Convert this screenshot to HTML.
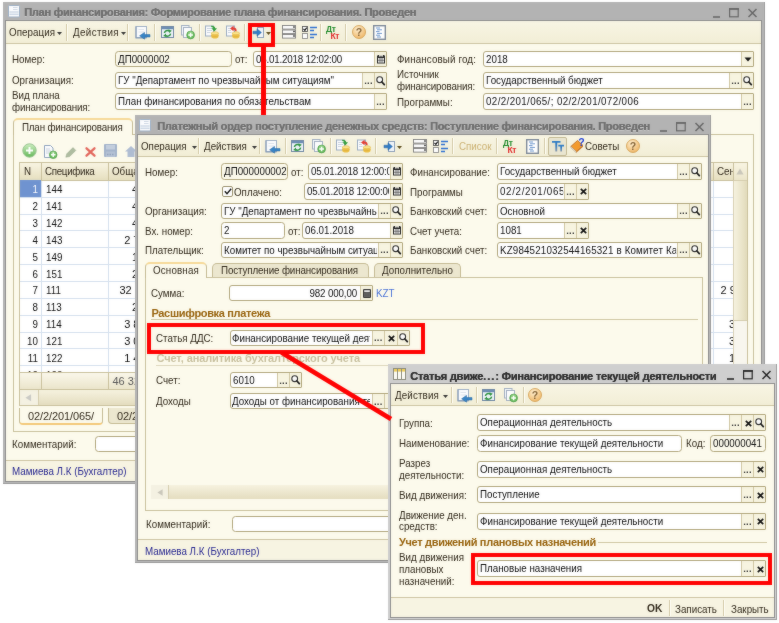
<!DOCTYPE html><html lang="ru"><head><meta charset="utf-8"><title>План финансирования</title><style>
*{box-sizing:border-box;margin:0;padding:0}
html,body{width:779px;height:623px;background:#fff;overflow:hidden}
body{position:relative;font-family:"Liberation Sans",sans-serif;font-size:11px;letter-spacing:0;color:#30281a;filter:url(#soft);}
.a{position:absolute}
.t{position:absolute;white-space:nowrap;line-height:13px;transform:scaleX(0.89);transform-origin:0 50%}
.tr{transform-origin:100% 50%}
.tc{transform-origin:50% 50%}
.ns{transform:none}
.win{position:absolute;background:#b3b3b3;box-shadow:inset -1px -1px 0 #9c9c9c;}
.win.act{background:#cfcfcf;}
.body{position:absolute;background:#fcfaec;border:1px solid #8e8e8e;}
.ttl{position:absolute;white-space:nowrap;font-weight:bold;font-size:11px;letter-spacing:-0.26px;color:#6f6f6f;line-height:14px;text-shadow:0.4px 0 0 #6f6f6f,0 1px 0 #c8c8c8}
.act .ttl{color:#2e2e2e;text-shadow:0.4px 0 0 #2e2e2e}
.tb{position:absolute;background:linear-gradient(#f8f5e4,#f2eed6);border-bottom:1px solid #cdc4a2;}
.sep{position:absolute;width:1px;background:#d3caa8;box-shadow:1px 0 0 #fffef6;}
.in{position:absolute;background:#fff;border:1px solid #b1a67b;border-radius:3.5px;overflow:hidden;white-space:nowrap;line-height:14px;padding-left:3px;color:#0c0c0c}
.in.ro{background:#fcfaec}
.btn{position:absolute;top:0;bottom:0;background:#f7f4e0;border-left:1px solid #cfc6a2;text-align:center;font-size:9px;line-height:13px;color:#222;letter-spacing:0}
.tab{position:absolute;border:1px solid #c4ba93;border-bottom:none;border-radius:5px 5px 0 0;background:#ece7cf;white-space:nowrap;text-align:center;line-height:14px}
.tab.on{background:#fcfaec;border-top:2px solid #f6d997;}
.panel{position:absolute;border:1px solid #c9c09c;}
.grp{position:absolute;white-space:nowrap;font-weight:bold;font-size:11px;letter-spacing:-0.1px;color:#96610a;line-height:13px}
.grp.dis{color:#c7bf9d}
.ln{position:absolute;height:1px;background:#cfc6a2}
.red{position:absolute;border:4px solid #ff0000;}
.blue{color:#25258f}
svg{position:absolute;overflow:visible}
</style></head><body><svg width="0" height="0" style="position:absolute"><filter id="soft" x="0" y="0" width="100%" height="100%" color-interpolation-filters="sRGB"><feGaussianBlur stdDeviation="1" result="b"/><feComposite in="SourceGraphic" in2="b" operator="arithmetic" k1="0" k2="0.7" k3="0.3" k4="0"/></filter></svg>
<div class="win" style="left:3px;top:2px;width:762px;height:482px"></div>
<div class="body" style="left:5px;top:20px;width:757px;height:462px"></div>
<svg style="left:8.3px;top:5.2px" width="12" height="12.5" viewBox="0 0 12 12.5"><rect x="0.5" y="0.5" width="11" height="11.500" rx="1" fill="#fbfcfe" stroke="#9db0c6"/><path d="M5 2.500h4.500M5 4.500h4.500" stroke="#d3dbe6" stroke-width="1"/><path d="M1.500 7h9M1.500 9.300h9" stroke="#cfd9e6" stroke-width="1.500"/></svg>
<div class="ttl" style="left:24px;top:5px">План финансирования: Формирование плана финансирования. Проведен</div>
<svg style="left:713px;top:7.5px" width="46" height="10" viewBox="0 0 46 10"><path d="M0 9h7" stroke="#666" stroke-width="1.6"/><rect x="16.6" y="0.8" width="8.6" height="8" fill="none" stroke="#666" stroke-width="1.2"/><path d="M16 1h10" stroke="#666" stroke-width="1.6"/><path d="M35.5 1l8 8M43.500 1l-8 8" stroke="#666" stroke-width="1.5"/></svg>
<div class="tb" style="left:6px;top:21px;width:755px;height:23px"></div>
<div class="t " style="left:9px;top:25.5px;letter-spacing:0.052px;">Операция</div>
<svg style="left:57px;top:31.5px" width="5" height="3" viewBox="0 0 5 3"><path d="M0 0h5L2.5 3z" fill="#333"/></svg>
<div class="sep" style="left:66px;top:24px;height:17px"></div>
<div class="t " style="left:72.5px;top:25.5px;letter-spacing:0.436px;">Действия</div>
<svg style="left:120.5px;top:31.5px" width="5" height="3" viewBox="0 0 5 3"><path d="M0 0h5L2.5 3z" fill="#333"/></svg>
<div class="sep" style="left:127px;top:24px;height:17px"></div>
<svg style="left:134.5px;top:25.5px" width="16" height="14" viewBox="0 0 16 14"><rect x="1" y="0.5" width="10.5" height="11" fill="#fbfcfe" stroke="#9fb0c6" stroke-width="1"/><path d="M1 0.5v11.500h10.500" stroke="#7f95b3" stroke-width="1.100" fill="none"/><path d="M3.500 3.500h5.500M3.500 6h5.500" stroke="#d5dce6" stroke-width="0.8"/><path d="M15 8.600h-5.500v-2.200L4.600 9.800l4.900 3.400v-2.200h5.500z" fill="#3583c6" stroke="#25659f" stroke-width="0.5"/></svg>
<div class="sep" style="left:154px;top:24px;height:17px"></div>
<svg style="left:160.7px;top:26.3px" width="13" height="12" viewBox="0 0 13 12"><rect x="0.5" y="0.500" width="12" height="11" fill="#eef3f9" stroke="#6f87a3"/><rect x="1" y="1" width="11" height="2.200" fill="#6b8bb3"/><path d="M3.400 7A3.100 2.800 0 0 1 8.300 5" stroke="#2f9440" stroke-width="1.500" fill="none"/><path d="M7.300 3.300l3.500 1.400-2.600 2.300z" fill="#2f9440"/><path d="M9.600 7.600A3.100 2.800 0 0 1 4.700 9.600" stroke="#2f9440" stroke-width="1.500" fill="none"/><path d="M5.700 11.300l-3.500-1.400 2.600-2.300z" fill="#2f9440"/></svg>
<svg style="left:181px;top:25px" width="14" height="14" viewBox="0 0 14 14"><rect x="0.5" y="0.5" width="7.5" height="9.500" fill="#f3f6fa" stroke="#a3b0c2"/><rect x="2.5" y="2.500" width="8" height="10" fill="#fdfdfe" stroke="#a3b0c2"/><circle cx="9.6" cy="10" r="3.9" fill="#67bb5b" stroke="#4a9a46" stroke-width="0.7"/><circle cx="9.6" cy="8.83" r="2.535" fill="#a6dd98" opacity="0.55"/><path d="M9.6 7.66v4.68M7.26 10h4.68" stroke="#fff" stroke-width="1.5"/></svg>
<div class="sep" style="left:199px;top:24px;height:17px"></div>
<svg style="left:205px;top:25px" width="14" height="14" viewBox="0 0 14 14"><rect x="0.500" y="1" width="8" height="10" fill="#fbfcfe" stroke="#9aabc1"/><path d="M2 3.500h5M2 5.500h5M2 7.500h3.500" stroke="#c6d0dc" stroke-width="0.9"/><path d="M6.200 0.800c2.400-.2 3.800.7 4 2.400h1.800L9.300 6.400 6.500 3.200h1.800c-.2-.8-.9-1.200-2.100-1.300z" fill="#2f9c3a"/><path d="M6.300 8.200v3.900c0 .9 1.600 1.500 3.600 1.500s3.600-.6 3.600-1.500V8.200z" fill="#ecbf45"/><path d="M6.300 10.200c0 .9 1.600 1.500 3.600 1.500s3.600-.6 3.600-1.500" stroke="#d6a531" stroke-width="0.500" fill="none"/><ellipse cx="9.900" cy="8.200" rx="3.600" ry="1.500" fill="#fae48e" stroke="#dcae38" stroke-width="0.5"/></svg>
<svg style="left:226px;top:25px" width="14" height="14" viewBox="0 0 14 14"><rect x="0.500" y="1" width="8" height="10" fill="#fbfcfe" stroke="#9aabc1"/><path d="M2 3.500h2M2 5.500h3M2 7.500h3.500" stroke="#c6d0dc" stroke-width="0.9"/><path d="M10.600 6.300c.3-2.400-.9-3.700-3-3.800V0.700L4 3.400l3.600 2.800V4.400c1 .1 1.600.7 1.500 1.900z" fill="#e2392f"/><path d="M6.300 8.200v3.900c0 .9 1.600 1.500 3.600 1.500s3.600-.6 3.600-1.500V8.200z" fill="#ecbf45"/><path d="M6.300 10.200c0 .9 1.600 1.500 3.600 1.500s3.600-.6 3.600-1.500" stroke="#d6a531" stroke-width="0.500" fill="none"/><ellipse cx="9.900" cy="8.200" rx="3.600" ry="1.500" fill="#fae48e" stroke="#dcae38" stroke-width="0.5"/></svg>
<div class="sep" style="left:244px;top:24px;height:17px"></div>
<svg style="left:253px;top:27px" width="11" height="11" viewBox="0 0 11 11"><rect x="4.500" y="0.500" width="6" height="10" fill="#f3f6fa" stroke="#8c9fb8"/><path d="M0 4.200h4V1.800L8.400 5.500 4 9.200V6.800H0z" fill="#2f7ac4" stroke="#1f5e9f" stroke-width="0.5"/></svg>
<svg style="left:266px;top:31.5px" width="5" height="3" viewBox="0 0 5 3"><path d="M0 0h5L2.5 3z" fill="#5a4a1a"/></svg>
<svg style="left:282px;top:25px" width="14" height="14" viewBox="0 0 14 14"><rect x="0.500" y="0.500" width="13" height="3.600" fill="#fff" stroke="#7a7a7a" stroke-width="0.9"/><rect x="0.5" y="5" width="13" height="3.600" fill="#fff" stroke="#7a7a7a" stroke-width="0.9"/><rect x="0.5" y="9.500" width="13" height="3.600" fill="#fff" stroke="#7a7a7a" stroke-width="0.9"/><path d="M12 1.200v1.600M12 5.700v1.600M12 10.200v1.600" stroke="#333" stroke-width="1.600"/></svg>
<svg style="left:302px;top:26px" width="15" height="13" viewBox="0 0 15 13"><rect x="0.5" y="0.5" width="5" height="5" fill="#fff" stroke="#555" stroke-width="0.9"/><path d="M1.500 3l1.400 1.400L4.700 1.600" stroke="#111" stroke-width="1.100" fill="none"/><rect x="0.5" y="7.500" width="5" height="5" fill="#fff" stroke="#888" stroke-width="0.9"/><path d="M8 1.500h7M8 4.500h4M8 8.500h7M8 11.500h4" stroke="#2c6fd1" stroke-width="1.500"/></svg>
<div class="sep" style="left:320px;top:24px;height:17px"></div>
<div class="a" style="left:326px;top:26px;width:16px;height:14px;font-weight:bold;font-size:8.5px;letter-spacing:-0.4px;line-height:7px"><span class="a" style="left:0;top:0;color:#1f8a2a">Дт</span><span class="a" style="left:4.5px;top:6.500px;color:#e02b2b">Кт</span></div>
<div class="sep" style="left:345px;top:24px;height:17px"></div>
<svg style="left:351.5px;top:25.299999999999997px" width="14.0" height="14.0" viewBox="0 0 14.0 14.0"><defs><radialGradient id="hg358" cx="0.4" cy="0.3" r="0.8"><stop offset="0" stop-color="#fff0d2"/><stop offset="1" stop-color="#edb05a"/></radialGradient></defs><circle cx="7.0" cy="7.0" r="6.5" fill="url(#hg358)" stroke="#cf9a4a" stroke-width="0.8"/><text x="7.0" y="10.7" text-anchor="middle" font-family="Liberation Sans" font-weight="bold" font-size="10.5" fill="#86663a">?</text></svg>
<svg style="left:373px;top:24.5px" width="13" height="15" viewBox="0 0 13 15"><rect x="0.700" y="0.700" width="11.600" height="13.600" fill="#fff" stroke="#7b8797" stroke-width="1.400"/><path d="M3 3h4M4 4.800h5M3 6.600h3.500M4 8.400h5M3 10.200h4M4 12h4" stroke="#4a7dc0" stroke-width="0.8"/></svg>
<div class="t " style="left:12px;top:52.5px;">Номер:</div>
<div class="in ro" style="left:115px;top:50.8px;width:117px;height:16.5px;line-height:14.5px;"><div class="a" style="left:1.8px;top:0px;width:125.8px;overflow:hidden;transform:scaleX(0.89);transform-origin:0 50%;">ДП0000002</div></div>
<div class="t " style="left:235px;top:52.5px;">от:</div>
<div class="in " style="left:253px;top:50.8px;width:134px;height:16.5px;line-height:14.5px;border-radius:3px 1px 1px 3px;"><div class="a" style="left:1.8px;top:0px;width:131.5px;overflow:hidden;transform:scaleX(0.89);transform-origin:0 50%;letter-spacing:-0.226px;">05.01.2018 12:02:00</div><div class="btn" style="right:0px;width:12px"><svg style="left:2px;top:3px" width="8" height="8.500" viewBox="0 0 8 8.500"><rect x="0" y="0.800" width="8" height="7.700" fill="#262626"/><path d="M1.300 0v1.600M6.700 0v1.600" stroke="#262626" stroke-width="1.400"/><path d="M2.900 0.400v1.500M5.100 0.400v1.500" stroke="#f4f4f4" stroke-width="1"/><rect x="1" y="3" width="6" height="4.600" fill="#e9e9e9"/><path d="M3 3v4.600M5 3v4.600M1 5.300h6" stroke="#555" stroke-width="0.700"/></svg></div></div>
<div class="t " style="left:12px;top:73.5px;">Организация:</div>
<div class="in " style="left:115px;top:72px;width:272px;height:16.5px;line-height:14.5px;border-radius:3px 1px 1px 3px;"><div class="a" style="left:1.8px;top:0px;width:273.0px;overflow:hidden;transform:scaleX(0.89);transform-origin:0 50%;">ГУ "Департамент по чрезвычайным ситуациям"</div><div class="btn" style="right:12px;width:12px"><span style="position:relative;top:0.5px;font-weight:bold;font-size:9.5px;letter-spacing:0.2px;color:#333">...</span></div><div class="btn" style="right:0px;width:12px"><svg style="left:1px;top:2.55px" width="10" height="10" viewBox="0 0 10 10"><circle cx="3.700" cy="3.700" r="2.900" fill="#fff" stroke="#2a2a2a" stroke-width="1.100"/><path d="M5.900 6 L8.300 8.600" stroke="#1a1a1a" stroke-width="1.800" stroke-linecap="round"/></svg></div></div>
<div class="t " style="left:12px;top:88.5px;">Вид плана</div>
<div class="t " style="left:12px;top:100.5px;letter-spacing:-0.185px;">финансирования:</div>
<div class="in " style="left:115px;top:93.1px;width:272px;height:16.5px;line-height:14.5px;border-radius:3px 1px 1px 3px;"><div class="a" style="left:1.8px;top:0px;width:286.5px;overflow:hidden;transform:scaleX(0.89);transform-origin:0 50%;">План финансирования по обязательствам</div><div class="btn" style="right:0px;width:12px"><span style="position:relative;top:0.5px;font-weight:bold;font-size:9.5px;letter-spacing:0.2px;color:#333">...</span></div></div>
<div class="t " style="left:397px;top:52.5px;letter-spacing:0.145px;">Финансовый год:</div>
<div class="in " style="left:483px;top:50.8px;width:271px;height:16.5px;line-height:14.5px;border-radius:3px 1px 1px 3px;"><div class="a" style="left:1.8px;top:0px;width:285.4px;overflow:hidden;transform:scaleX(0.89);transform-origin:0 50%;">2018</div><div class="btn" style="right:0px;width:12px"><svg style="left:2px;top:5.25px" width="8" height="5" viewBox="0 0 8 5"><path d="M0.5 0.5h7L4 4.5z" fill="#111"/></svg></div></div>
<div class="t " style="left:397px;top:68.0px;">Источник</div>
<div class="t " style="left:397px;top:80.0px;letter-spacing:-0.185px;">финансирования:</div>
<div class="in " style="left:483px;top:72px;width:271px;height:16.5px;line-height:14.5px;border-radius:3px 1px 1px 3px;"><div class="a" style="left:1.8px;top:0px;width:271.9px;overflow:hidden;transform:scaleX(0.89);transform-origin:0 50%;">Государственный бюджет</div><div class="btn" style="right:12px;width:12px"><span style="position:relative;top:0.5px;font-weight:bold;font-size:9.5px;letter-spacing:0.2px;color:#333">...</span></div><div class="btn" style="right:0px;width:12px"><svg style="left:1px;top:2.55px" width="10" height="10" viewBox="0 0 10 10"><circle cx="3.700" cy="3.700" r="2.900" fill="#fff" stroke="#2a2a2a" stroke-width="1.100"/><path d="M5.900 6 L8.300 8.600" stroke="#1a1a1a" stroke-width="1.800" stroke-linecap="round"/></svg></div></div>
<div class="t " style="left:397px;top:95.5px;">Программы:</div>
<div class="in " style="left:483px;top:93.1px;width:271px;height:16.5px;line-height:14.5px;border-radius:3px 1px 1px 3px;"><div class="a" style="left:1.8px;top:0px;width:285.4px;overflow:hidden;transform:scaleX(0.89);transform-origin:0 50%;letter-spacing:0.416px;">02/2/201/065/; 02/2/201/072/006</div><div class="btn" style="right:0px;width:12px"><span style="position:relative;top:0.5px;font-weight:bold;font-size:9.5px;letter-spacing:0.2px;color:#333">...</span></div></div>
<div class="panel" style="left:13px;top:134px;width:741px;height:298px"></div>
<div class="tab on" style="left:13px;top:118px;width:119.5px;height:17px"></div>
<div class="t " style="left:22px;top:120.5px;letter-spacing:-0.211px;">План финансирования</div>
<svg style="left:21.9px;top:143.1px" width="15" height="15" viewBox="0 0 15 15"><defs><linearGradient id="ga" x1="0" y1="0" x2="0" y2="1"><stop offset="0" stop-color="#cdeec0"/><stop offset="1" stop-color="#62b656"/></linearGradient></defs><circle cx="7.500" cy="7.500" r="6.700" fill="url(#ga)" stroke="#9ac493" stroke-width="1"/><path d="M7.500 4v7M4 7.500h7" stroke="#fff" stroke-width="1.900"/></svg>
<svg style="left:44px;top:144.5px" width="14" height="14" viewBox="0 0 14 14"><path d="M0.500 0.5h6l2.500 2.500v9.500h-8.500z" fill="#fbfcfe" stroke="#8fa3bd"/><path d="M2 4h4M2 6h5M2 8h3" stroke="#c4cedb" stroke-width="0.9"/><circle cx="9.2" cy="9.8" r="3.8" fill="#67bb5b" stroke="#4a9a46" stroke-width="0.7"/><circle cx="9.2" cy="8.66" r="2.4699999999999998" fill="#a6dd98" opacity="0.55"/><path d="M9.2 7.520000000000001v4.56M6.92 9.8h4.56" stroke="#fff" stroke-width="1.5"/></svg>
<svg style="left:64.5px;top:145.5px" width="12" height="12" viewBox="0 0 12 12"><path d="M0.800 11.200l1-3.400L8 1.600l2.800 2.800L4.600 10.600z" fill="#adbb9f" stroke="#95a588" stroke-width="0.5"/></svg>
<svg style="left:84.8px;top:146.5px" width="11" height="10" viewBox="0 0 11 10"><path d="M1.500 1.300l8 7.400M9.500 1.300l-8 7.400" stroke="#e2675d" stroke-width="2.300" stroke-linecap="round"/></svg>
<svg style="left:104.2px;top:144.0px" width="13" height="13" viewBox="0 0 13 13"><rect x="0" y="0" width="13" height="13" rx="1" fill="#a3b3ca"/><rect x="2" y="1" width="9" height="4.500" fill="#c3cedd"/><rect x="2" y="7.500" width="9" height="5.500" fill="#b4c1d4"/><path d="M3 10.500h7" stroke="#93a4bd" stroke-width="1.500" stroke-dasharray="1.500 1"/></svg>
<svg style="left:124.5px;top:145.5px" width="12" height="11" viewBox="0 0 12 11"><path d="M6 0L12 5.500H9.500V11H2.500V5.500H0z" fill="#aebcd2"/></svg>
<div class="a" style="left:19px;top:162px;width:729px;height:244px;background:#fff;border:1px solid #c9c09c"></div>
<div class="a" style="left:20px;top:163px;width:727px;height:18px;background:linear-gradient(#f8f4e2,#e6dfbf);border-bottom:1px solid #c9c09c"></div>
<div class="a" style="left:41px;top:163px;width:1px;height:18px;background:#c9c09c"></div>
<div class="a" style="left:41px;top:181px;width:1px;height:206px;background:#d5e0ee"></div>
<div class="a" style="left:108px;top:163px;width:1px;height:18px;background:#c9c09c"></div>
<div class="a" style="left:108px;top:181px;width:1px;height:206px;background:#d5e0ee"></div>
<div class="a" style="left:713px;top:163px;width:1px;height:18px;background:#c9c09c"></div>
<div class="a" style="left:713px;top:181px;width:1px;height:206px;background:#d5e0ee"></div>
<div class="t " style="left:23.5px;top:165.0px;">N</div>
<div class="t " style="left:45px;top:165.0px;letter-spacing:-0.357px;">Специфика</div>
<div class="t " style="left:112px;top:165.0px;">Обща</div>
<div class="t " style="left:717px;top:165.0px;">Сен</div>
<div class="a" style="left:20px;top:180.4px;width:21px;height:16.85px;background:#6f93d0"></div>
<div class="a" style="left:20px;top:196.75px;width:713px;height:1px;background:#d5e0ee"></div>
<div class="t tr" style="left:19px;width:19px;text-align:right;top:183.32500000000002px;color:#fff">1</div>
<div class="t " style="left:46px;top:183.32500000000002px;color:#0c0c0c">144</div>
<div class="a" style="left:20px;top:213.6px;width:713px;height:1px;background:#d5e0ee"></div>
<div class="t tr" style="left:19px;width:19px;text-align:right;top:200.175px;color:#0c0c0c">2</div>
<div class="t " style="left:46px;top:200.175px;color:#0c0c0c">141</div>
<div class="a" style="left:20px;top:230.45000000000002px;width:713px;height:1px;background:#d5e0ee"></div>
<div class="t tr" style="left:19px;width:19px;text-align:right;top:217.02500000000003px;color:#0c0c0c">3</div>
<div class="t " style="left:46px;top:217.02500000000003px;color:#0c0c0c">142</div>
<div class="a" style="left:20px;top:247.3px;width:713px;height:1px;background:#d5e0ee"></div>
<div class="t tr" style="left:19px;width:19px;text-align:right;top:233.87500000000003px;color:#0c0c0c">4</div>
<div class="t " style="left:46px;top:233.87500000000003px;color:#0c0c0c">143</div>
<div class="a" style="left:20px;top:264.15000000000003px;width:713px;height:1px;background:#d5e0ee"></div>
<div class="t tr" style="left:19px;width:19px;text-align:right;top:250.72500000000002px;color:#0c0c0c">5</div>
<div class="t " style="left:46px;top:250.72500000000002px;color:#0c0c0c">149</div>
<div class="a" style="left:20px;top:281.0px;width:713px;height:1px;background:#d5e0ee"></div>
<div class="t tr" style="left:19px;width:19px;text-align:right;top:267.575px;color:#0c0c0c">6</div>
<div class="t " style="left:46px;top:267.575px;color:#0c0c0c">151</div>
<div class="a" style="left:20px;top:297.85px;width:713px;height:1px;background:#d5e0ee"></div>
<div class="t tr" style="left:19px;width:19px;text-align:right;top:284.425px;color:#0c0c0c">7</div>
<div class="t " style="left:46px;top:284.425px;color:#0c0c0c">111</div>
<div class="a" style="left:20px;top:314.70000000000005px;width:713px;height:1px;background:#d5e0ee"></div>
<div class="t tr" style="left:19px;width:19px;text-align:right;top:301.27500000000003px;color:#0c0c0c">8</div>
<div class="t " style="left:46px;top:301.27500000000003px;color:#0c0c0c">113</div>
<div class="a" style="left:20px;top:331.55000000000007px;width:713px;height:1px;background:#d5e0ee"></div>
<div class="t tr" style="left:19px;width:19px;text-align:right;top:318.12500000000006px;color:#0c0c0c">9</div>
<div class="t " style="left:46px;top:318.12500000000006px;color:#0c0c0c">114</div>
<div class="a" style="left:20px;top:348.40000000000003px;width:713px;height:1px;background:#d5e0ee"></div>
<div class="t tr" style="left:19px;width:19px;text-align:right;top:334.975px;color:#0c0c0c">10</div>
<div class="t " style="left:46px;top:334.975px;color:#0c0c0c">121</div>
<div class="a" style="left:20px;top:365.25px;width:713px;height:1px;background:#d5e0ee"></div>
<div class="t tr" style="left:19px;width:19px;text-align:right;top:351.825px;color:#0c0c0c">11</div>
<div class="t " style="left:46px;top:351.825px;color:#0c0c0c">122</div>
<div class="a" style="left:20px;top:372px;width:713px;height:18px;background:linear-gradient(#faf7ea,#ebe5cb);border-top:1px solid #c9c09c;border-bottom:1px solid #c9c09c"></div>
<div class="a" style="left:41px;top:373px;width:1px;height:16px;background:#c9c09c"></div><div class="a" style="left:108px;top:373px;width:1px;height:16px;background:#c9c09c"></div>
<div class="t ns" style="left:112.5px;top:375.0px;color:#555">46 32</div>
<div class="a" style="left:19px;top:367px;width:88px;height:5px;overflow:hidden"><div class="t tr" style="left:0;width:19px;text-align:right;top:1.5px">12</div><div class="t" style="left:27px;top:1.5px">123</div></div>
<div class="a" style="left:733px;top:163px;width:14px;height:227px;background:#f8f6ee;border-left:1px solid #d8d0b4"></div>
<div class="a" style="left:733px;top:163px;width:14px;height:18px;background:linear-gradient(#f8f4e2,#ece6cb);border-left:1px solid #c9c09c;border-bottom:1px solid #d5cdae"></div>
<svg style="left:736px;top:168px" width="8" height="7" viewBox="0 0 8 7"><path d="M4 0.5L7.6 6.5H0.4z" fill="#c9c6ba"/></svg>
<div class="a" style="left:734px;top:181px;width:13px;height:140px;background:linear-gradient(90deg,#f6f2df,#e2dbbb);border-bottom:1px solid #d5cdae"></div>
<div class="a" style="left:20px;top:390px;width:713px;height:15px;background:linear-gradient(#f6f2df,#e4ddbf)"></div>
<div class="a" style="left:20px;top:390px;width:19px;height:15px;background:#f4f1e2;border-right:1px solid #d5cdae"></div>
<svg style="left:24.5px;top:394px" width="6.5" height="7.5" viewBox="0 0 6 7"><path d="M0.4 3.5L5.6 0.3v6.4z" fill="#c9c9c4"/></svg>
<div class="a" style="left:19px;top:408px;width:84px;height:17px;border:1px solid #c4ba93;border-top:none;border-radius:0 0 4px 4px;background:#fcfaec;border-bottom:2px solid #f3c878;text-align:center;line-height:17px;font-size:11px;letter-spacing:-0.1px">02/2/201/065/</div>
<div class="a" style="left:108px;top:408px;width:84px;height:16px;border:1px solid #c4ba93;border-top:none;border-radius:0 0 4px 4px;background:#ece7cf;line-height:17px;font-size:11px;letter-spacing:-0.1px;padding-left:8px">02/2/201/072/006</div>
<div class="t " style="left:12px;top:437.5px;">Комментарий:</div>
<div class="in " style="left:95px;top:436px;width:660px;height:16px;line-height:14.0px;"><div class="a" style="left:1.8px;top:0px;width:736.0px;overflow:hidden;transform:scaleX(0.89);transform-origin:0 50%;"></div></div>
<div class="a" style="left:6px;top:460px;width:755px;height:1px;background:#cdc4a2"></div>
<div class="a" style="left:6px;top:461px;width:755px;height:20px;background:#f7f4e2"></div>
<div class="t blue" style="left:12px;top:464.5px;">Мамиева Л.К (Бухгалтер)</div>
<div class="a" style="left:713px;top:181px;width:20px;height:190px;overflow:hidden">
<div class="t ns" style="left:7.5px;top:103.42500000000001px;color:#0c0c0c">2 9</div>
<div class="t ns" style="left:16px;top:137.12500000000006px;color:#0c0c0c">3</div>
<div class="t ns" style="left:16px;top:153.97500000000002px;color:#0c0c0c">3</div>
<div class="t ns" style="left:16px;top:170.825px;color:#0c0c0c">1</div>
</div>
<div class="t ns" style="left:132px;top:183.32500000000002px;color:#0c0c0c">4</div>
<div class="t ns" style="left:132px;top:200.175px;color:#0c0c0c">4</div>
<div class="t ns" style="left:132px;top:217.02500000000003px;color:#0c0c0c">4</div>
<div class="t ns" style="left:124.2px;top:233.87500000000003px;color:#0c0c0c">2 7</div>
<div class="t ns" style="left:132px;top:250.72500000000002px;color:#0c0c0c">1</div>
<div class="t ns" style="left:132px;top:267.575px;color:#0c0c0c">2</div>
<div class="t ns" style="left:119.4px;top:284.425px;color:#0c0c0c">32 8</div>
<div class="t ns" style="left:132px;top:301.27500000000003px;color:#0c0c0c">2</div>
<div class="t ns" style="left:124.2px;top:318.12500000000006px;color:#0c0c0c">3 8</div>
<div class="t ns" style="left:124.2px;top:334.975px;color:#0c0c0c">3 0</div>
<div class="t ns" style="left:124.2px;top:351.825px;color:#0c0c0c">1 4</div>
<div class="red" style="left:248px;top:23px;width:27px;height:24px"></div>
<div class="a" style="left:261px;top:46px;width:5px;height:72px;background:#ff0000"></div>
<div class="win" style="left:135px;top:115px;width:576px;height:448px"></div>
<div class="body" style="left:137px;top:134px;width:572px;height:427px"></div>
<svg style="left:139.3px;top:119.2px" width="12" height="12.5" viewBox="0 0 12 12.5"><rect x="0.5" y="0.5" width="11" height="11.500" rx="1" fill="#fbfcfe" stroke="#9db0c6"/><path d="M5 2.500h4.500M5 4.500h4.500" stroke="#d3dbe6" stroke-width="1"/><path d="M1.500 7h9M1.500 9.300h9" stroke="#cfd9e6" stroke-width="1.500"/></svg>
<div class="ttl" style="left:157px;top:119px">Платежный ордер поступление денежных средств: Поступление финансирования. Проведен</div>
<svg style="left:660px;top:121.5px" width="46" height="10" viewBox="0 0 46 10"><path d="M0 9h7" stroke="#666" stroke-width="1.6"/><rect x="16.6" y="0.8" width="8.6" height="8" fill="none" stroke="#666" stroke-width="1.2"/><path d="M16 1h10" stroke="#666" stroke-width="1.6"/><path d="M35.5 1l8 8M43.500 1l-8 8" stroke="#666" stroke-width="1.5"/></svg>
<div class="tb" style="left:138px;top:135px;width:570px;height:22px"></div>
<div class="t " style="left:141px;top:139.5px;">Операция</div>
<svg style="left:192px;top:145.5px" width="5" height="3" viewBox="0 0 5 3"><path d="M0 0h5L2.5 3z" fill="#333"/></svg>
<div class="sep" style="left:198px;top:138px;height:16px"></div>
<div class="t " style="left:204px;top:139.5px;">Действия</div>
<svg style="left:252px;top:145.5px" width="5" height="3" viewBox="0 0 5 3"><path d="M0 0h5L2.5 3z" fill="#333"/></svg>
<div class="sep" style="left:259px;top:138px;height:16px"></div>
<svg style="left:265px;top:140px" width="16" height="14" viewBox="0 0 16 14"><rect x="1" y="0.5" width="10.5" height="11" fill="#fbfcfe" stroke="#9fb0c6" stroke-width="1"/><path d="M1 0.5v11.500h10.500" stroke="#7f95b3" stroke-width="1.100" fill="none"/><path d="M3.500 3.500h5.500M3.500 6h5.500" stroke="#d5dce6" stroke-width="0.8"/><path d="M15 8.600h-5.500v-2.200L4.600 9.800l4.900 3.400v-2.200h5.500z" fill="#3583c6" stroke="#25659f" stroke-width="0.5"/></svg>
<div class="sep" style="left:285px;top:138px;height:16px"></div>
<svg style="left:291px;top:140px" width="13" height="12" viewBox="0 0 13 12"><rect x="0.5" y="0.500" width="12" height="11" fill="#eef3f9" stroke="#6f87a3"/><rect x="1" y="1" width="11" height="2.200" fill="#6b8bb3"/><path d="M3.400 7A3.100 2.800 0 0 1 8.300 5" stroke="#2f9440" stroke-width="1.500" fill="none"/><path d="M7.300 3.300l3.500 1.400-2.600 2.300z" fill="#2f9440"/><path d="M9.600 7.600A3.100 2.800 0 0 1 4.700 9.600" stroke="#2f9440" stroke-width="1.500" fill="none"/><path d="M5.700 11.300l-3.500-1.400 2.600-2.300z" fill="#2f9440"/></svg>
<svg style="left:312px;top:139px" width="14" height="14" viewBox="0 0 14 14"><rect x="0.5" y="0.5" width="7.5" height="9.500" fill="#f3f6fa" stroke="#a3b0c2"/><rect x="2.5" y="2.500" width="8" height="10" fill="#fdfdfe" stroke="#a3b0c2"/><circle cx="9.6" cy="10" r="3.9" fill="#67bb5b" stroke="#4a9a46" stroke-width="0.7"/><circle cx="9.6" cy="8.83" r="2.535" fill="#a6dd98" opacity="0.55"/><path d="M9.6 7.66v4.68M7.26 10h4.68" stroke="#fff" stroke-width="1.5"/></svg>
<div class="sep" style="left:330px;top:138px;height:16px"></div>
<svg style="left:336px;top:139px" width="14" height="14" viewBox="0 0 14 14"><rect x="0.500" y="1" width="8" height="10" fill="#fbfcfe" stroke="#9aabc1"/><path d="M2 3.500h5M2 5.500h5M2 7.500h3.500" stroke="#c6d0dc" stroke-width="0.9"/><path d="M6.200 0.800c2.400-.2 3.800.7 4 2.400h1.800L9.300 6.400 6.500 3.200h1.800c-.2-.8-.9-1.200-2.100-1.300z" fill="#2f9c3a"/><path d="M6.300 8.200v3.900c0 .9 1.600 1.500 3.600 1.500s3.600-.6 3.600-1.500V8.200z" fill="#ecbf45"/><path d="M6.300 10.200c0 .9 1.600 1.500 3.600 1.500s3.600-.6 3.600-1.500" stroke="#d6a531" stroke-width="0.500" fill="none"/><ellipse cx="9.900" cy="8.200" rx="3.600" ry="1.500" fill="#fae48e" stroke="#dcae38" stroke-width="0.5"/></svg>
<svg style="left:357px;top:139px" width="14" height="14" viewBox="0 0 14 14"><rect x="0.500" y="1" width="8" height="10" fill="#fbfcfe" stroke="#9aabc1"/><path d="M2 3.500h2M2 5.500h3M2 7.500h3.500" stroke="#c6d0dc" stroke-width="0.9"/><path d="M10.600 6.300c.3-2.400-.9-3.700-3-3.800V0.700L4 3.400l3.600 2.800V4.400c1 .1 1.600.7 1.500 1.900z" fill="#e2392f"/><path d="M6.300 8.200v3.900c0 .9 1.600 1.500 3.600 1.500s3.600-.6 3.600-1.500V8.200z" fill="#ecbf45"/><path d="M6.300 10.200c0 .9 1.600 1.500 3.600 1.500s3.600-.6 3.600-1.500" stroke="#d6a531" stroke-width="0.500" fill="none"/><ellipse cx="9.900" cy="8.200" rx="3.600" ry="1.500" fill="#fae48e" stroke="#dcae38" stroke-width="0.5"/></svg>
<div class="sep" style="left:375px;top:138px;height:16px"></div>
<svg style="left:384px;top:141px" width="11" height="11" viewBox="0 0 11 11"><rect x="4.500" y="0.500" width="6" height="10" fill="#f3f6fa" stroke="#8c9fb8"/><path d="M0 4.200h4V1.800L8.400 5.500 4 9.200V6.800H0z" fill="#2f7ac4" stroke="#1f5e9f" stroke-width="0.5"/></svg>
<svg style="left:397px;top:145.5px" width="5" height="3" viewBox="0 0 5 3"><path d="M0 0h5L2.5 3z" fill="#5a4a1a"/></svg>
<svg style="left:413px;top:139px" width="14" height="14" viewBox="0 0 14 14"><rect x="0.500" y="0.500" width="13" height="3.600" fill="#fff" stroke="#7a7a7a" stroke-width="0.9"/><rect x="0.5" y="5" width="13" height="3.600" fill="#fff" stroke="#7a7a7a" stroke-width="0.9"/><rect x="0.5" y="9.500" width="13" height="3.600" fill="#fff" stroke="#7a7a7a" stroke-width="0.9"/><path d="M12 1.200v1.600M12 5.700v1.600M12 10.200v1.600" stroke="#333" stroke-width="1.600"/></svg>
<svg style="left:433px;top:140px" width="15" height="13" viewBox="0 0 15 13"><rect x="0.5" y="0.5" width="5" height="5" fill="#fff" stroke="#555" stroke-width="0.9"/><path d="M1.500 3l1.400 1.400L4.700 1.600" stroke="#111" stroke-width="1.100" fill="none"/><rect x="0.5" y="7.500" width="5" height="5" fill="#fff" stroke="#888" stroke-width="0.9"/><path d="M8 1.500h7M8 4.500h4M8 8.500h7M8 11.500h4" stroke="#2c6fd1" stroke-width="1.500"/></svg>
<div class="sep" style="left:452px;top:138px;height:16px"></div>
<div class="t " style="left:459px;top:139.5px;color:#cbb071">Список</div>
<div class="sep" style="left:496px;top:138px;height:16px"></div>
<div class="a" style="left:503px;top:140px;width:16px;height:14px;font-weight:bold;font-size:8.5px;letter-spacing:-0.4px;line-height:7px"><span class="a" style="left:0;top:0;color:#1f8a2a">Дт</span><span class="a" style="left:4.5px;top:6.500px;color:#e02b2b">Кт</span></div>
<svg style="left:526px;top:138.5px" width="13" height="15" viewBox="0 0 13 15"><rect x="0.700" y="0.700" width="11.600" height="13.600" fill="#fff" stroke="#7b8797" stroke-width="1.400"/><path d="M3 3h4M4 4.800h5M3 6.600h3.500M4 8.400h5M3 10.200h4M4 12h4" stroke="#4a7dc0" stroke-width="0.8"/></svg>
<div class="sep" style="left:544px;top:138px;height:16px"></div>
<div class="a" style="left:548px;top:137px;width:19px;height:19px;border:1px solid #c2b892;background:#eae6d1;border-radius:2px"></div>
<svg style="left:551.5px;top:141px" width="13" height="11" viewBox="0 0 13 11"><defs><linearGradient id="gt" x1="0" y1="0" x2="0" y2="1"><stop offset="0.4" stop-color="#2c7ac4"/><stop offset="1" stop-color="#8a98a8"/></linearGradient></defs><path d="M0 0h8.500v1.800h-3.300v8.700h-1.900V1.800H0z" fill="url(#gt)"/><path d="M6.300 3.800h5.700v1.700h-2v5h-1.700v-5h-2z" fill="url(#gt)"/></svg>
<svg style="left:570px;top:138px" width="16" height="15" viewBox="0 0 16 15"><path d="M0.800 8.500L7.500 2.500l5.500 5-6.700 6z" fill="#f39a2c" stroke="#b5651d" stroke-width="0.8"/><path d="M0.800 8.500l5.500 5v1.300L0.800 9.800z" fill="#f4f0e6" stroke="#9a8a70" stroke-width="0.4"/><path d="M6.300 13.500l6.700-6v1.300l-6.700 6z" fill="#c9741f"/><text x="8.200" y="8.200" font-family="Liberation Sans" font-weight="bold" font-size="10.500" fill="#1f3fd6">?</text></svg>
<div class="t " style="left:585px;top:139.5px;">Советы</div>
<svg style="left:626.0px;top:139.0px" width="14.0" height="14.0" viewBox="0 0 14.0 14.0"><defs><radialGradient id="hg633" cx="0.4" cy="0.3" r="0.8"><stop offset="0" stop-color="#fff0d2"/><stop offset="1" stop-color="#edb05a"/></radialGradient></defs><circle cx="7.0" cy="7.0" r="6.5" fill="url(#hg633)" stroke="#cf9a4a" stroke-width="0.8"/><text x="7.0" y="10.7" text-anchor="middle" font-family="Liberation Sans" font-weight="bold" font-size="10.5" fill="#86663a">?</text></svg>
<div class="t " style="left:145px;top:165.5px;">Номер:</div>
<div class="in ro" style="left:221px;top:163.4px;width:67px;height:16.4px;line-height:14.4px;"><div class="a" style="left:1.8px;top:0px;width:69.7px;overflow:hidden;transform:scaleX(0.89);transform-origin:0 50%;">ДП000000002</div></div>
<div class="t " style="left:291px;top:165.5px;">от:</div>
<div class="in " style="left:308px;top:163.4px;width:95px;height:16.4px;line-height:14.4px;border-radius:3px 1px 1px 3px;"><div class="a" style="left:1.8px;top:0px;width:87.6px;overflow:hidden;transform:scaleX(0.89);transform-origin:0 50%;letter-spacing:-0.226px;">05.01.2018 12:00:00</div><div class="btn" style="right:0px;width:12px"><svg style="left:2px;top:2.95px" width="8" height="8.500" viewBox="0 0 8 8.500"><rect x="0" y="0.800" width="8" height="7.700" fill="#262626"/><path d="M1.300 0v1.600M6.700 0v1.600" stroke="#262626" stroke-width="1.400"/><path d="M2.900 0.400v1.500M5.100 0.400v1.500" stroke="#f4f4f4" stroke-width="1"/><rect x="1" y="3" width="6" height="4.600" fill="#e9e9e9"/><path d="M3 3v4.600M5 3v4.600M1 5.300h6" stroke="#555" stroke-width="0.700"/></svg></div></div>
<div class="a" style="left:221.500px;top:185.500px;width:11.5px;height:11.5px;background:#fff;border:1px solid #9a916e;border-radius:2px"></div>
<svg style="left:224px;top:188px" width="8" height="7" viewBox="0 0 8 7"><path d="M0.8 3.2l2.2 2.4L7.2 0.8" stroke="#111" stroke-width="1.4" fill="none"/></svg>
<div class="t " style="left:234px;top:185.5px;">Оплачено:</div>
<div class="in " style="left:304px;top:183.2px;width:99px;height:16.4px;line-height:14.4px;border-radius:3px 1px 1px 3px;"><div class="a" style="left:1.8px;top:0px;width:92.1px;overflow:hidden;transform:scaleX(0.89);transform-origin:0 50%;letter-spacing:-0.226px;">05.01.2018 12:00:00</div><div class="btn" style="right:0px;width:12px"><svg style="left:2px;top:2.95px" width="8" height="8.500" viewBox="0 0 8 8.500"><rect x="0" y="0.800" width="8" height="7.700" fill="#262626"/><path d="M1.300 0v1.600M6.700 0v1.600" stroke="#262626" stroke-width="1.400"/><path d="M2.900 0.400v1.500M5.100 0.400v1.500" stroke="#f4f4f4" stroke-width="1"/><rect x="1" y="3" width="6" height="4.600" fill="#e9e9e9"/><path d="M3 3v4.600M5 3v4.600M1 5.300h6" stroke="#555" stroke-width="0.700"/></svg></div></div>
<div class="t " style="left:145px;top:204.5px;">Организация:</div>
<div class="in " style="left:221px;top:202.7px;width:182px;height:16.4px;line-height:14.4px;border-radius:3px 1px 1px 3px;"><div class="a" style="left:1.8px;top:0px;width:171.9px;overflow:hidden;transform:scaleX(0.89);transform-origin:0 50%;">ГУ "Департамент по чрезвычайным</div><div class="btn" style="right:12px;width:12px"><span style="position:relative;top:0.5px;font-weight:bold;font-size:9.5px;letter-spacing:0.2px;color:#333">...</span></div><div class="btn" style="right:0px;width:12px"><svg style="left:1px;top:2.499999999999999px" width="10" height="10" viewBox="0 0 10 10"><circle cx="3.700" cy="3.700" r="2.900" fill="#fff" stroke="#2a2a2a" stroke-width="1.100"/><path d="M5.900 6 L8.300 8.600" stroke="#1a1a1a" stroke-width="1.800" stroke-linecap="round"/></svg></div></div>
<div class="t " style="left:145px;top:224.5px;">Вх. номер:</div>
<div class="in " style="left:221px;top:222.2px;width:64px;height:16.4px;line-height:14.4px;"><div class="a" style="left:1.8px;top:0px;width:66.3px;overflow:hidden;transform:scaleX(0.89);transform-origin:0 50%;">2</div></div>
<div class="t " style="left:288px;top:224.5px;">от:</div>
<div class="in " style="left:302px;top:222.2px;width:101px;height:16.4px;line-height:14.4px;border-radius:3px 1px 1px 3px;"><div class="a" style="left:1.8px;top:0px;width:94.4px;overflow:hidden;transform:scaleX(0.89);transform-origin:0 50%;">06.01.2018</div><div class="btn" style="right:0px;width:12px"><svg style="left:2px;top:2.95px" width="8" height="8.500" viewBox="0 0 8 8.500"><rect x="0" y="0.800" width="8" height="7.700" fill="#262626"/><path d="M1.300 0v1.600M6.700 0v1.600" stroke="#262626" stroke-width="1.400"/><path d="M2.900 0.400v1.500M5.100 0.400v1.500" stroke="#f4f4f4" stroke-width="1"/><rect x="1" y="3" width="6" height="4.600" fill="#e9e9e9"/><path d="M3 3v4.600M5 3v4.600M1 5.300h6" stroke="#555" stroke-width="0.700"/></svg></div></div>
<div class="t " style="left:145px;top:244.0px;">Плательщик:</div>
<div class="in " style="left:221px;top:241.6px;width:182px;height:16.4px;line-height:14.4px;border-radius:3px 1px 1px 3px;"><div class="a" style="left:1.8px;top:0px;width:171.9px;overflow:hidden;transform:scaleX(0.89);transform-origin:0 50%;">Комитет по чрезвычайным ситуациям</div><div class="btn" style="right:12px;width:12px"><span style="position:relative;top:0.5px;font-weight:bold;font-size:9.5px;letter-spacing:0.2px;color:#333">...</span></div><div class="btn" style="right:0px;width:12px"><svg style="left:1px;top:2.499999999999999px" width="10" height="10" viewBox="0 0 10 10"><circle cx="3.700" cy="3.700" r="2.900" fill="#fff" stroke="#2a2a2a" stroke-width="1.100"/><path d="M5.900 6 L8.300 8.600" stroke="#1a1a1a" stroke-width="1.800" stroke-linecap="round"/></svg></div></div>
<div class="t " style="left:410px;top:165.5px;">Финансирование:</div>
<div class="in " style="left:497px;top:163.4px;width:205px;height:16.4px;line-height:14.4px;border-radius:3px 1px 1px 3px;"><div class="a" style="left:1.8px;top:0px;width:197.8px;overflow:hidden;transform:scaleX(0.89);transform-origin:0 50%;">Государственный бюджет</div><div class="btn" style="right:12px;width:12px"><span style="position:relative;top:0.5px;font-weight:bold;font-size:9.5px;letter-spacing:0.2px;color:#333">...</span></div><div class="btn" style="right:0px;width:12px"><svg style="left:1px;top:2.499999999999999px" width="10" height="10" viewBox="0 0 10 10"><circle cx="3.700" cy="3.700" r="2.900" fill="#fff" stroke="#2a2a2a" stroke-width="1.100"/><path d="M5.900 6 L8.300 8.600" stroke="#1a1a1a" stroke-width="1.800" stroke-linecap="round"/></svg></div></div>
<div class="t " style="left:410px;top:185.5px;">Программы</div>
<div class="in " style="left:497px;top:183.2px;width:92px;height:16.4px;line-height:14.4px;border-radius:3px 1px 1px 3px;"><div class="a" style="left:1.8px;top:0px;width:70.8px;overflow:hidden;transform:scaleX(0.89);transform-origin:0 50%;letter-spacing:0.745px;">02/2/201/065/</div><div class="btn" style="right:12px;width:12px"><span style="position:relative;top:0.5px;font-weight:bold;font-size:9.5px;letter-spacing:0.2px;color:#333">...</span></div><div class="btn" style="right:0px;width:12px"><svg style="left:2.5px;top:4.2px" width="7" height="7" viewBox="0 0 7 7"><path d="M0.8 0.8 L6.2 6.2 M6.2 0.8 L0.8 6.2" stroke="#111" stroke-width="1.7"/></svg></div></div>
<div class="t " style="left:410px;top:204.5px;">Банковский счет:</div>
<div class="in " style="left:497px;top:202.7px;width:205px;height:16.4px;line-height:14.4px;border-radius:3px 1px 1px 3px;"><div class="a" style="left:1.8px;top:0px;width:197.8px;overflow:hidden;transform:scaleX(0.89);transform-origin:0 50%;">Основной</div><div class="btn" style="right:12px;width:12px"><span style="position:relative;top:0.5px;font-weight:bold;font-size:9.5px;letter-spacing:0.2px;color:#333">...</span></div><div class="btn" style="right:0px;width:12px"><svg style="left:1px;top:2.499999999999999px" width="10" height="10" viewBox="0 0 10 10"><circle cx="3.700" cy="3.700" r="2.900" fill="#fff" stroke="#2a2a2a" stroke-width="1.100"/><path d="M5.900 6 L8.300 8.600" stroke="#1a1a1a" stroke-width="1.800" stroke-linecap="round"/></svg></div></div>
<div class="t " style="left:410px;top:224.5px;">Счет учета:</div>
<div class="in " style="left:497px;top:222.2px;width:92px;height:16.4px;line-height:14.4px;border-radius:3px 1px 1px 3px;"><div class="a" style="left:1.8px;top:0px;width:70.8px;overflow:hidden;transform:scaleX(0.89);transform-origin:0 50%;">1081</div><div class="btn" style="right:12px;width:12px"><span style="position:relative;top:0.5px;font-weight:bold;font-size:9.5px;letter-spacing:0.2px;color:#333">...</span></div><div class="btn" style="right:0px;width:12px"><svg style="left:2.5px;top:4.2px" width="7" height="7" viewBox="0 0 7 7"><path d="M0.8 0.8 L6.2 6.2 M6.2 0.8 L0.8 6.2" stroke="#111" stroke-width="1.7"/></svg></div></div>
<div class="t " style="left:410px;top:244.0px;">Банковский счет:</div>
<div class="in " style="left:497px;top:241.6px;width:205px;height:16.4px;line-height:14.4px;border-radius:3px 1px 1px 3px;"><div class="a" style="left:1.8px;top:0px;width:197.8px;overflow:hidden;transform:scaleX(0.89);transform-origin:0 50%;letter-spacing:0.17px;">KZ984521032544165321 в Комитет Казначейства</div><div class="btn" style="right:12px;width:12px"><span style="position:relative;top:0.5px;font-weight:bold;font-size:9.5px;letter-spacing:0.2px;color:#333">...</span></div><div class="btn" style="right:0px;width:12px"><svg style="left:1px;top:2.499999999999999px" width="10" height="10" viewBox="0 0 10 10"><circle cx="3.700" cy="3.700" r="2.900" fill="#fff" stroke="#2a2a2a" stroke-width="1.100"/><path d="M5.900 6 L8.300 8.600" stroke="#1a1a1a" stroke-width="1.800" stroke-linecap="round"/></svg></div></div>
<div class="panel" style="left:145px;top:277px;width:558px;height:234px"></div>
<div class="tab on" style="left:145px;top:262px;width:62px;height:16px"></div>
<div class="t " style="left:153px;top:264.0px;letter-spacing:0.181px;">Основная</div>
<div class="tab" style="left:212px;top:263px;width:157px;height:14px"></div>
<div class="t " style="left:221px;top:264.0px;letter-spacing:-0.134px;">Поступление финансирования</div>
<div class="tab" style="left:374px;top:263px;width:87px;height:14px"></div>
<div class="t " style="left:381.5px;top:264.0px;letter-spacing:0.047px;">Дополнительно</div>
<div class="t " style="left:151px;top:286.5px;">Сумма:</div>
<div class="in " style="left:229px;top:285px;width:144px;height:16px;line-height:14.0px;border-radius:3px 1px 1px 3px;"><div class="a" style="left:0;top:0px;width:127px;text-align:right;transform:scaleX(0.89);transform-origin:100% 50%;letter-spacing:-0.168px;">982 000,00</div><div class="btn" style="right:0px;width:12px"><svg style="left:1.5px;top:2.5px" width="8" height="9" viewBox="0 0 8 9"><rect x="0" y="0" width="8" height="9" rx="1" fill="#333"/><rect x="1.2" y="1.2" width="5.6" height="2" fill="#eee"/><path d="M1.5 5h5M1.5 7h5" stroke="#ddd" stroke-width="1" stroke-dasharray="1 1"/></svg></div></div>
<div class="t " style="left:376px;top:286.5px;color:#466fd6">KZT</div>
<div class="grp " style="left:151.5px;top:306.5px;letter-spacing:-0.343px">Расшифровка платежа</div>
<div class="ln" style="left:151px;top:319px;width:547px"></div>
<div class="t " style="left:156px;top:331.5px;">Статья ДДС:</div>
<div class="in " style="left:229.5px;top:329.5px;width:180.5px;height:16.5px;line-height:14.5px;border-radius:3px 1px 1px 3px;"><div class="a" style="left:1.8px;top:0px;width:155.1px;overflow:hidden;transform:scaleX(0.89);transform-origin:0 50%;">Финансирование текущей деятельности</div><div class="btn" style="right:25.0px;width:12.5px"><span style="position:relative;top:0.5px;font-weight:bold;font-size:9.5px;letter-spacing:0.2px;color:#333">...</span></div><div class="btn" style="right:12.5px;width:12.5px"><svg style="left:2.5px;top:4.25px" width="7" height="7" viewBox="0 0 7 7"><path d="M0.8 0.8 L6.2 6.2 M6.2 0.8 L0.8 6.2" stroke="#111" stroke-width="1.7"/></svg></div><div class="btn" style="right:0.0px;width:12.5px"><svg style="left:1px;top:2.55px" width="10" height="10" viewBox="0 0 10 10"><circle cx="3.700" cy="3.700" r="2.900" fill="#fff" stroke="#2a2a2a" stroke-width="1.100"/><path d="M5.900 6 L8.300 8.600" stroke="#1a1a1a" stroke-width="1.800" stroke-linecap="round"/></svg></div></div>
<div class="grp dis" style="left:156.5px;top:352.0px;letter-spacing:-0.114px">Счет, аналитика бухгалтерского учета</div>
<div class="ln" style="left:156px;top:365px;width:542px;background:#ddd7bd"></div>
<div class="t " style="left:156px;top:373.5px;">Счет:</div>
<div class="in " style="left:230px;top:372px;width:72px;height:16px;line-height:14.0px;border-radius:3px 1px 1px 3px;"><div class="a" style="left:1.8px;top:0px;width:48.3px;overflow:hidden;transform:scaleX(0.89);transform-origin:0 50%;">6010</div><div class="btn" style="right:12px;width:12px"><span style="position:relative;top:0.5px;font-weight:bold;font-size:9.5px;letter-spacing:0.2px;color:#333">...</span></div><div class="btn" style="right:0px;width:12px"><svg style="left:1px;top:2.3px" width="10" height="10" viewBox="0 0 10 10"><circle cx="3.700" cy="3.700" r="2.900" fill="#fff" stroke="#2a2a2a" stroke-width="1.100"/><path d="M5.900 6 L8.300 8.600" stroke="#1a1a1a" stroke-width="1.800" stroke-linecap="round"/></svg></div></div>
<div class="t " style="left:156px;top:394.5px;">Доходы</div>
<div class="in " style="left:229.5px;top:393px;width:180.5px;height:16px;line-height:14.0px;border-radius:3px 1px 1px 3px;"><div class="a" style="left:1.8px;top:0px;width:155.1px;overflow:hidden;transform:scaleX(0.89);transform-origin:0 50%;">Доходы от финансирования текущей</div><div class="btn" style="right:25.0px;width:12.5px"><span style="position:relative;top:0.5px;font-weight:bold;font-size:9.5px;letter-spacing:0.2px;color:#333">...</span></div><div class="btn" style="right:12.5px;width:12.5px"><svg style="left:2.5px;top:4px" width="7" height="7" viewBox="0 0 7 7"><path d="M0.8 0.8 L6.2 6.2 M6.2 0.8 L0.8 6.2" stroke="#111" stroke-width="1.7"/></svg></div><div class="btn" style="right:0.0px;width:12.5px"><svg style="left:1px;top:2.3px" width="10" height="10" viewBox="0 0 10 10"><circle cx="3.700" cy="3.700" r="2.900" fill="#fff" stroke="#2a2a2a" stroke-width="1.100"/><path d="M5.900 6 L8.300 8.600" stroke="#1a1a1a" stroke-width="1.800" stroke-linecap="round"/></svg></div></div>
<div class="a" style="left:151px;top:485px;width:547px;height:14px;background:linear-gradient(#f6f2df,#e4ddbf)"></div>
<div class="a" style="left:151px;top:485px;width:18px;height:14px;background:#f4f1e2;border-right:1px solid #d5cdae"></div>
<svg style="left:157px;top:489px" width="6" height="7" viewBox="0 0 6 7"><path d="M0.4 3.5L5.6 0.3v6.4z" fill="#c9c6ba"/></svg>
<div class="t " style="left:146px;top:517.5px;">Комментарий:</div>
<div class="in " style="left:232px;top:516px;width:470px;height:16px;line-height:14.0px;"><div class="a" style="left:1.8px;top:0px;width:522.5px;overflow:hidden;transform:scaleX(0.89);transform-origin:0 50%;"></div></div>
<div class="a" style="left:138px;top:539px;width:570px;height:1px;background:#cdc4a2"></div>
<div class="a" style="left:138px;top:540px;width:570px;height:20px;background:#f7f4e2"></div>
<div class="t blue" style="left:145px;top:544.5px;">Мамиева Л.К (Бухгалтер)</div>
<div class="red" style="left:147px;top:323px;width:278px;height:30.5px"></div>
<div class="win act" style="left:388px;top:364px;width:389px;height:256px"></div>
<div class="body" style="left:390px;top:383px;width:385px;height:235px"></div>
<div class="act">
<svg style="left:393px;top:368px" width="13" height="12" viewBox="0 0 13 12"><rect x="0.5" y="0.5" width="12" height="11" fill="#fffef6" stroke="#8a8a7a"/><rect x="1" y="1" width="11" height="2.6" fill="#f1cf5a"/><path d="M4.5 1v10M8.5 1v10" stroke="#8a8a7a" stroke-width="1"/></svg>
<div class="ttl" style="left:410px;top:369px;letter-spacing:-0.2px">Статья движе<span style="letter-spacing:1px">...</span>: Финансирование текущей деятельности</div>
</div>
<svg style="left:727px;top:370px" width="46" height="10" viewBox="0 0 46 10"><path d="M0 9h7" stroke="#222" stroke-width="1.6"/><rect x="16.6" y="0.8" width="8.6" height="8" fill="none" stroke="#222" stroke-width="1.2"/><path d="M16 1h10" stroke="#222" stroke-width="1.6"/><path d="M35.5 1l8 8M43.500 1l-8 8" stroke="#222" stroke-width="1.5"/></svg>
<div class="tb" style="left:391px;top:384px;width:383px;height:22px"></div>
<div class="t " style="left:394.5px;top:388.5px;letter-spacing:0.156px;">Действия</div>
<svg style="left:442.5px;top:394.5px" width="5" height="3" viewBox="0 0 5 3"><path d="M0 0h5L2.5 3z" fill="#333"/></svg>
<div class="sep" style="left:451px;top:387px;height:16px"></div>
<svg style="left:457px;top:389px" width="16" height="14" viewBox="0 0 16 14"><rect x="1" y="0.5" width="10.5" height="11" fill="#fbfcfe" stroke="#9fb0c6" stroke-width="1"/><path d="M1 0.5v11.500h10.500" stroke="#7f95b3" stroke-width="1.100" fill="none"/><path d="M3.500 3.500h5.500M3.500 6h5.500" stroke="#d5dce6" stroke-width="0.8"/><path d="M15 8.600h-5.500v-2.200L4.600 9.800l4.900 3.400v-2.200h5.500z" fill="#3583c6" stroke="#25659f" stroke-width="0.5"/></svg>
<div class="sep" style="left:476px;top:387px;height:16px"></div>
<svg style="left:482px;top:389px" width="13" height="12" viewBox="0 0 13 12"><rect x="0.5" y="0.500" width="12" height="11" fill="#eef3f9" stroke="#6f87a3"/><rect x="1" y="1" width="11" height="2.200" fill="#6b8bb3"/><path d="M3.400 7A3.100 2.800 0 0 1 8.300 5" stroke="#2f9440" stroke-width="1.500" fill="none"/><path d="M7.300 3.300l3.500 1.400-2.600 2.300z" fill="#2f9440"/><path d="M9.600 7.600A3.100 2.800 0 0 1 4.700 9.600" stroke="#2f9440" stroke-width="1.500" fill="none"/><path d="M5.700 11.300l-3.500-1.400 2.600-2.300z" fill="#2f9440"/></svg>
<svg style="left:504px;top:388px" width="14" height="14" viewBox="0 0 14 14"><rect x="0.5" y="0.5" width="7.5" height="9.500" fill="#f3f6fa" stroke="#a3b0c2"/><rect x="2.5" y="2.500" width="8" height="10" fill="#fdfdfe" stroke="#a3b0c2"/><circle cx="9.6" cy="10" r="3.9" fill="#67bb5b" stroke="#4a9a46" stroke-width="0.7"/><circle cx="9.6" cy="8.83" r="2.535" fill="#a6dd98" opacity="0.55"/><path d="M9.6 7.66v4.68M7.26 10h4.68" stroke="#fff" stroke-width="1.5"/></svg>
<div class="sep" style="left:523px;top:387px;height:16px"></div>
<svg style="left:528.0px;top:388.0px" width="14.0" height="14.0" viewBox="0 0 14.0 14.0"><defs><radialGradient id="hg535" cx="0.4" cy="0.3" r="0.8"><stop offset="0" stop-color="#fff0d2"/><stop offset="1" stop-color="#edb05a"/></radialGradient></defs><circle cx="7.0" cy="7.0" r="6.5" fill="url(#hg535)" stroke="#cf9a4a" stroke-width="0.8"/><text x="7.0" y="10.7" text-anchor="middle" font-family="Liberation Sans" font-weight="bold" font-size="10.5" fill="#86663a">?</text></svg>
<div class="t " style="left:399px;top:416.5px;">Группа:</div>
<div class="in " style="left:477px;top:414.4px;width:289px;height:16.5px;line-height:14.5px;border-radius:3px 1px 1px 3px;"><div class="a" style="left:1.8px;top:0px;width:278.7px;overflow:hidden;transform:scaleX(0.89);transform-origin:0 50%;">Операционная деятельность</div><div class="btn" style="right:24px;width:12px"><span style="position:relative;top:0.5px;font-weight:bold;font-size:9.5px;letter-spacing:0.2px;color:#333">...</span></div><div class="btn" style="right:12px;width:12px"><svg style="left:2.5px;top:4.25px" width="7" height="7" viewBox="0 0 7 7"><path d="M0.8 0.8 L6.2 6.2 M6.2 0.8 L0.8 6.2" stroke="#111" stroke-width="1.7"/></svg></div><div class="btn" style="right:0px;width:12px"><svg style="left:1px;top:2.55px" width="10" height="10" viewBox="0 0 10 10"><circle cx="3.700" cy="3.700" r="2.900" fill="#fff" stroke="#2a2a2a" stroke-width="1.100"/><path d="M5.900 6 L8.300 8.600" stroke="#1a1a1a" stroke-width="1.800" stroke-linecap="round"/></svg></div></div>
<div class="t " style="left:399px;top:437.0px;">Наименование:</div>
<div class="in " style="left:477px;top:435px;width:205px;height:16.5px;line-height:14.5px;"><div class="a" style="left:1.8px;top:0px;width:224.7px;overflow:hidden;transform:scaleX(0.89);transform-origin:0 50%;">Финансирование текущей деятельности</div></div>
<div class="t " style="left:686px;top:437.0px;">Код:</div>
<div class="in ro" style="left:710px;top:435px;width:56px;height:16.5px;line-height:14.5px;"><div class="a" style="left:1.8px;top:0px;width:57.3px;overflow:hidden;transform:scaleX(0.89);transform-origin:0 50%;">000000041</div></div>
<div class="t " style="left:399px;top:456.5px;">Разрез</div>
<div class="t " style="left:399px;top:468.5px;">деятельности:</div>
<div class="in " style="left:477px;top:461.2px;width:289px;height:16.5px;line-height:14.5px;border-radius:3px 1px 1px 3px;"><div class="a" style="left:1.8px;top:0px;width:292.1px;overflow:hidden;transform:scaleX(0.89);transform-origin:0 50%;">Операционная деятельность</div><div class="btn" style="right:12px;width:12px"><span style="position:relative;top:0.5px;font-weight:bold;font-size:9.5px;letter-spacing:0.2px;color:#333">...</span></div><div class="btn" style="right:0px;width:12px"><svg style="left:2.5px;top:4.25px" width="7" height="7" viewBox="0 0 7 7"><path d="M0.8 0.8 L6.2 6.2 M6.2 0.8 L0.8 6.2" stroke="#111" stroke-width="1.7"/></svg></div></div>
<div class="t " style="left:399px;top:488.5px;">Вид движения:</div>
<div class="in " style="left:477px;top:486.3px;width:289px;height:16.5px;line-height:14.5px;border-radius:3px 1px 1px 3px;"><div class="a" style="left:1.8px;top:0px;width:292.1px;overflow:hidden;transform:scaleX(0.89);transform-origin:0 50%;">Поступление</div><div class="btn" style="right:12px;width:12px"><span style="position:relative;top:0.5px;font-weight:bold;font-size:9.5px;letter-spacing:0.2px;color:#333">...</span></div><div class="btn" style="right:0px;width:12px"><svg style="left:2.5px;top:4.25px" width="7" height="7" viewBox="0 0 7 7"><path d="M0.8 0.8 L6.2 6.2 M6.2 0.8 L0.8 6.2" stroke="#111" stroke-width="1.7"/></svg></div></div>
<div class="t " style="left:399px;top:508.5px;">Движение ден.</div>
<div class="t " style="left:399px;top:520.0px;">средств:</div>
<div class="in " style="left:477px;top:513px;width:289px;height:16.5px;line-height:14.5px;border-radius:3px 1px 1px 3px;"><div class="a" style="left:1.8px;top:0px;width:292.1px;overflow:hidden;transform:scaleX(0.89);transform-origin:0 50%;">Финансирование текущей деятельности</div><div class="btn" style="right:12px;width:12px"><span style="position:relative;top:0.5px;font-weight:bold;font-size:9.5px;letter-spacing:0.2px;color:#333">...</span></div><div class="btn" style="right:0px;width:12px"><svg style="left:2.5px;top:4.25px" width="7" height="7" viewBox="0 0 7 7"><path d="M0.8 0.8 L6.2 6.2 M6.2 0.8 L0.8 6.2" stroke="#111" stroke-width="1.7"/></svg></div></div>
<div class="grp " style="left:399px;top:535.5px;letter-spacing:-0.306px">Учет движений плановых назначений</div>
<div class="ln" style="left:598px;top:542px;width:169px"></div>
<div class="t " style="left:399px;top:550.8px;">Вид движения</div>
<div class="t " style="left:399px;top:562.5px;">плановых</div>
<div class="t " style="left:399px;top:574.5px;">назначений:</div>
<div class="in " style="left:477px;top:560.3px;width:289px;height:16.5px;line-height:14.5px;border-radius:3px 1px 1px 3px;"><div class="a" style="left:1.8px;top:0px;width:292.1px;overflow:hidden;transform:scaleX(0.89);transform-origin:0 50%;">Плановые назначения</div><div class="btn" style="right:12px;width:12px"><span style="position:relative;top:0.5px;font-weight:bold;font-size:9.5px;letter-spacing:0.2px;color:#333">...</span></div><div class="btn" style="right:0px;width:12px"><svg style="left:2.5px;top:4.25px" width="7" height="7" viewBox="0 0 7 7"><path d="M0.8 0.8 L6.2 6.2 M6.2 0.8 L0.8 6.2" stroke="#111" stroke-width="1.7"/></svg></div></div>
<div class="red" style="left:471px;top:553px;width:301px;height:32px;border-width:4.5px"></div>
<div class="a" style="left:391px;top:597px;width:383px;height:1px;background:#cdc4a2"></div>
<div class="a" style="left:391px;top:598px;width:383px;height:19px;background:#f7f4e2"></div>
<div class="t" style="left:647px;top:602px;font-weight:bold;font-size:11.5px">OK</div>
<div class="sep" style="left:669px;top:600px;height:16px"></div>
<div class="t " style="left:675px;top:602.5px;color:#4f4836letter-spacing:-0.188px;">Записать</div>
<div class="sep" style="left:723px;top:600px;height:16px"></div>
<div class="t " style="left:730.5px;top:602.5px;color:#4f4836letter-spacing:0.047px;">Закрыть</div>
<svg style="left:0;top:0" width="779" height="623" viewBox="0 0 779 623"><path d="M281.5 352.5L391 419" stroke="#ff0000" stroke-width="4.800"/></svg>
</body></html>
